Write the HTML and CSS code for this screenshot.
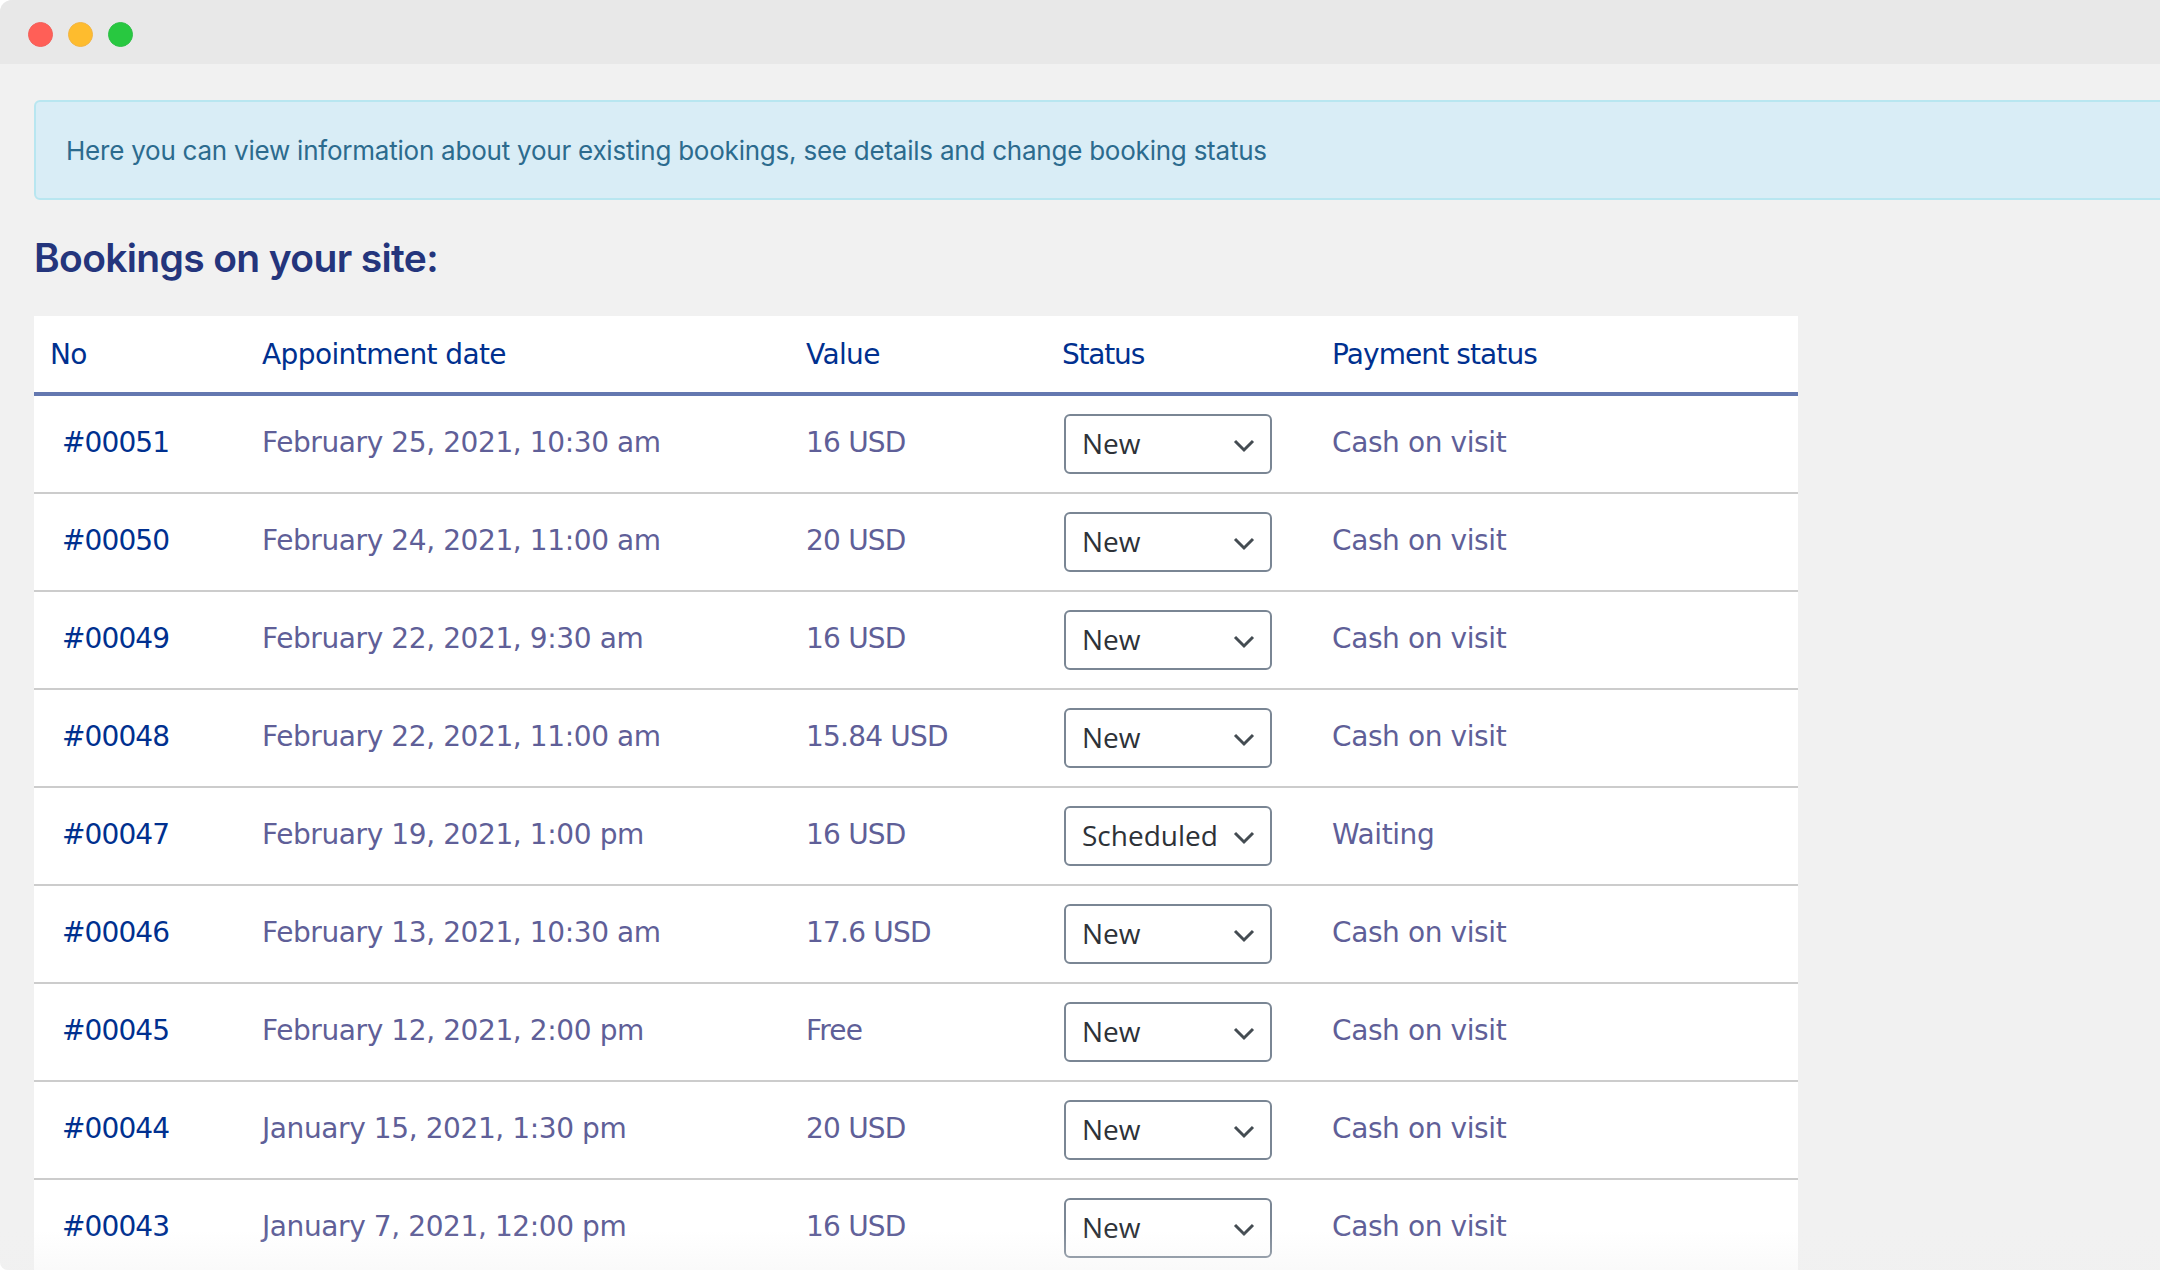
FILE: index.html
```html
<!DOCTYPE html>
<html lang="en">
<head>
    <meta charset="UTF-8">
    <title>Bookings</title>
    <link rel="stylesheet" href="styles.css">
</head>
<body>
    <div class="window">
        <div class="titlebar">
            <span class="dot dot-red"></span>
            <span class="dot dot-yellow"></span>
            <span class="dot dot-green"></span>
        </div>
        <div class="content">
            <div class="alert">Here you can view information about your existing bookings, see details and change booking status</div>
            <h2>Bookings on your site:</h2>
            <table class="bookings">
                <thead>
                    <tr>
                        <th class="col-no">No</th>
                        <th class="col-date">Appointment date</th>
                        <th class="col-value">Value</th>
                        <th class="col-status">Status</th>
                        <th class="col-payment">Payment status</th>
                    </tr>
                </thead>
                <tbody>
                    <tr>
                        <td><a href="#">#00051</a></td>
                        <td>February 25, 2021, 10:30 am</td>
                        <td class="value">16 USD</td>
                        <td><select><option>New</option></select></td>
                        <td>Cash on visit</td>
                    </tr>
                    <tr>
                        <td><a href="#">#00050</a></td>
                        <td>February 24, 2021, 11:00 am</td>
                        <td class="value">20 USD</td>
                        <td><select><option>New</option></select></td>
                        <td>Cash on visit</td>
                    </tr>
                    <tr>
                        <td><a href="#">#00049</a></td>
                        <td>February 22, 2021, 9:30 am</td>
                        <td class="value">16 USD</td>
                        <td><select><option>New</option></select></td>
                        <td>Cash on visit</td>
                    </tr>
                    <tr>
                        <td><a href="#">#00048</a></td>
                        <td>February 22, 2021, 11:00 am</td>
                        <td class="value">15.84 USD</td>
                        <td><select><option>New</option></select></td>
                        <td>Cash on visit</td>
                    </tr>
                    <tr>
                        <td><a href="#">#00047</a></td>
                        <td>February 19, 2021, 1:00 pm</td>
                        <td class="value">16 USD</td>
                        <td><select><option>Scheduled</option></select></td>
                        <td>Waiting</td>
                    </tr>
                    <tr>
                        <td><a href="#">#00046</a></td>
                        <td>February 13, 2021, 10:30 am</td>
                        <td class="value">17.6 USD</td>
                        <td><select><option>New</option></select></td>
                        <td>Cash on visit</td>
                    </tr>
                    <tr>
                        <td><a href="#">#00045</a></td>
                        <td>February 12, 2021, 2:00 pm</td>
                        <td class="value">Free</td>
                        <td><select><option>New</option></select></td>
                        <td>Cash on visit</td>
                    </tr>
                    <tr>
                        <td><a href="#">#00044</a></td>
                        <td>January 15, 2021, 1:30 pm</td>
                        <td class="value">20 USD</td>
                        <td><select><option>New</option></select></td>
                        <td>Cash on visit</td>
                    </tr>
                    <tr>
                        <td><a href="#">#00043</a></td>
                        <td>January 7, 2021, 12:00 pm</td>
                        <td class="value">16 USD</td>
                        <td><select><option>New</option></select></td>
                        <td>Cash on visit</td>
                    </tr>
                </tbody>
            </table>
        </div>
        <div class="bottom-fade"></div>
    </div>
</body>
</html>
```
FILE: styles.css
```css
html, body {
    margin: 0;
    padding: 0;
    height: 100%;
    overflow: hidden;
}

body {
    background-color: #fff;
    font-family: "DejaVu Sans", sans-serif;
}

.window {
    position: relative;
    height: 100%;
    overflow: hidden;
    background-color: #f1f1f1;
    border-radius: 12px 0 0 8px;
}

.titlebar {
    display: flex;
    align-items: center;
    gap: 15px;
    height: 64px;
    padding-left: 28px;
    padding-top: 4px;
    box-sizing: border-box;
    background-color: #e8e8e8;
}

.dot {
    width: 25px;
    height: 25px;
    box-sizing: border-box;
    border-radius: 50%;
    border: 1px solid transparent;
}

.dot-red { background-color: #ff5f57; border-color: #f2615c; }
.dot-yellow { background-color: #febc2e; border-color: #f2b544; }
.dot-green { background-color: #28c840; border-color: #2fbf48; }

.content {
    padding: 36px 0 0 34px;
}

.alert {
    height: 100px;
    box-sizing: border-box;
    margin-right: -20px;
    padding: 0 30px;
    display: flex;
    align-items: center;
    background-color: #d9edf6;
    border: 2px solid #b8e6f0;
    border-radius: 6px;
    color: #2c6b8e;
    font-family: Inter, sans-serif;
    font-size: 26px;
    letter-spacing: -0.23px;
}

h2 {
    margin: 36px 0 0;
    height: 44px;
    line-height: 44px;
    color: #24357c;
    font-family: Inter, sans-serif;
    font-size: 39px;
    font-weight: 600;
    letter-spacing: -0.65px;
}

.bookings {
    width: 1764px;
    margin-top: 36px;
    border-collapse: separate;
    border-spacing: 0;
    background-color: #fff;
    font-size: 28px;
}

.bookings th {
    height: 76px;
    padding: 0 0 0 16px;
    text-align: left;
    font-weight: normal;
    color: #00308f;
    letter-spacing: -0.6px;
    border-bottom: 4px solid #6478b0;
}

.col-no { width: 196px; }
.col-date { width: 528px; }
.col-value { width: 240px; }

.bookings .col-status {
    width: 254px;
    letter-spacing: -1.2px;
}

.bookings .col-payment {
    letter-spacing: -0.9px;
}

.bookings td {
    height: 98px;
    padding: 0 0 3px 16px;
    box-sizing: border-box;
    color: #5f5f98;
    letter-spacing: -0.4px;
    border-bottom: 2px solid #cccccc;
}

.bookings td:first-child {
    padding-left: 28px;
}

.bookings td.value {
    letter-spacing: -0.8px;
}

.bookings a {
    color: #00308f;
    letter-spacing: -0.9px;
    text-decoration: none;
}

select {
    appearance: none;
    display: block;
    width: 208px;
    height: 60px;
    margin: 3px 0 0 2px;
    padding: 0 16px 2px;
    background: #fff url("data:image/svg+xml,%3Csvg xmlns='http://www.w3.org/2000/svg' width='22' height='14' viewBox='0 0 22 14'%3E%3Cpath d='M2 2l9 9 9-9' fill='none' stroke='%23444c52' stroke-width='3'/%3E%3C/svg%3E") no-repeat right 15px top calc(50% + 2px);
    border: 2px solid #7a8694;
    border-radius: 6px;
    color: #2d3238;
    font-family: "Open Sans", sans-serif;
    font-size: 28px;
}

.bottom-fade {
    position: absolute;
    left: 0;
    right: 0;
    bottom: 0;
    height: 40px;
    background: linear-gradient(rgba(240, 240, 240, 0), rgba(240, 240, 240, 0.35));
}
```
